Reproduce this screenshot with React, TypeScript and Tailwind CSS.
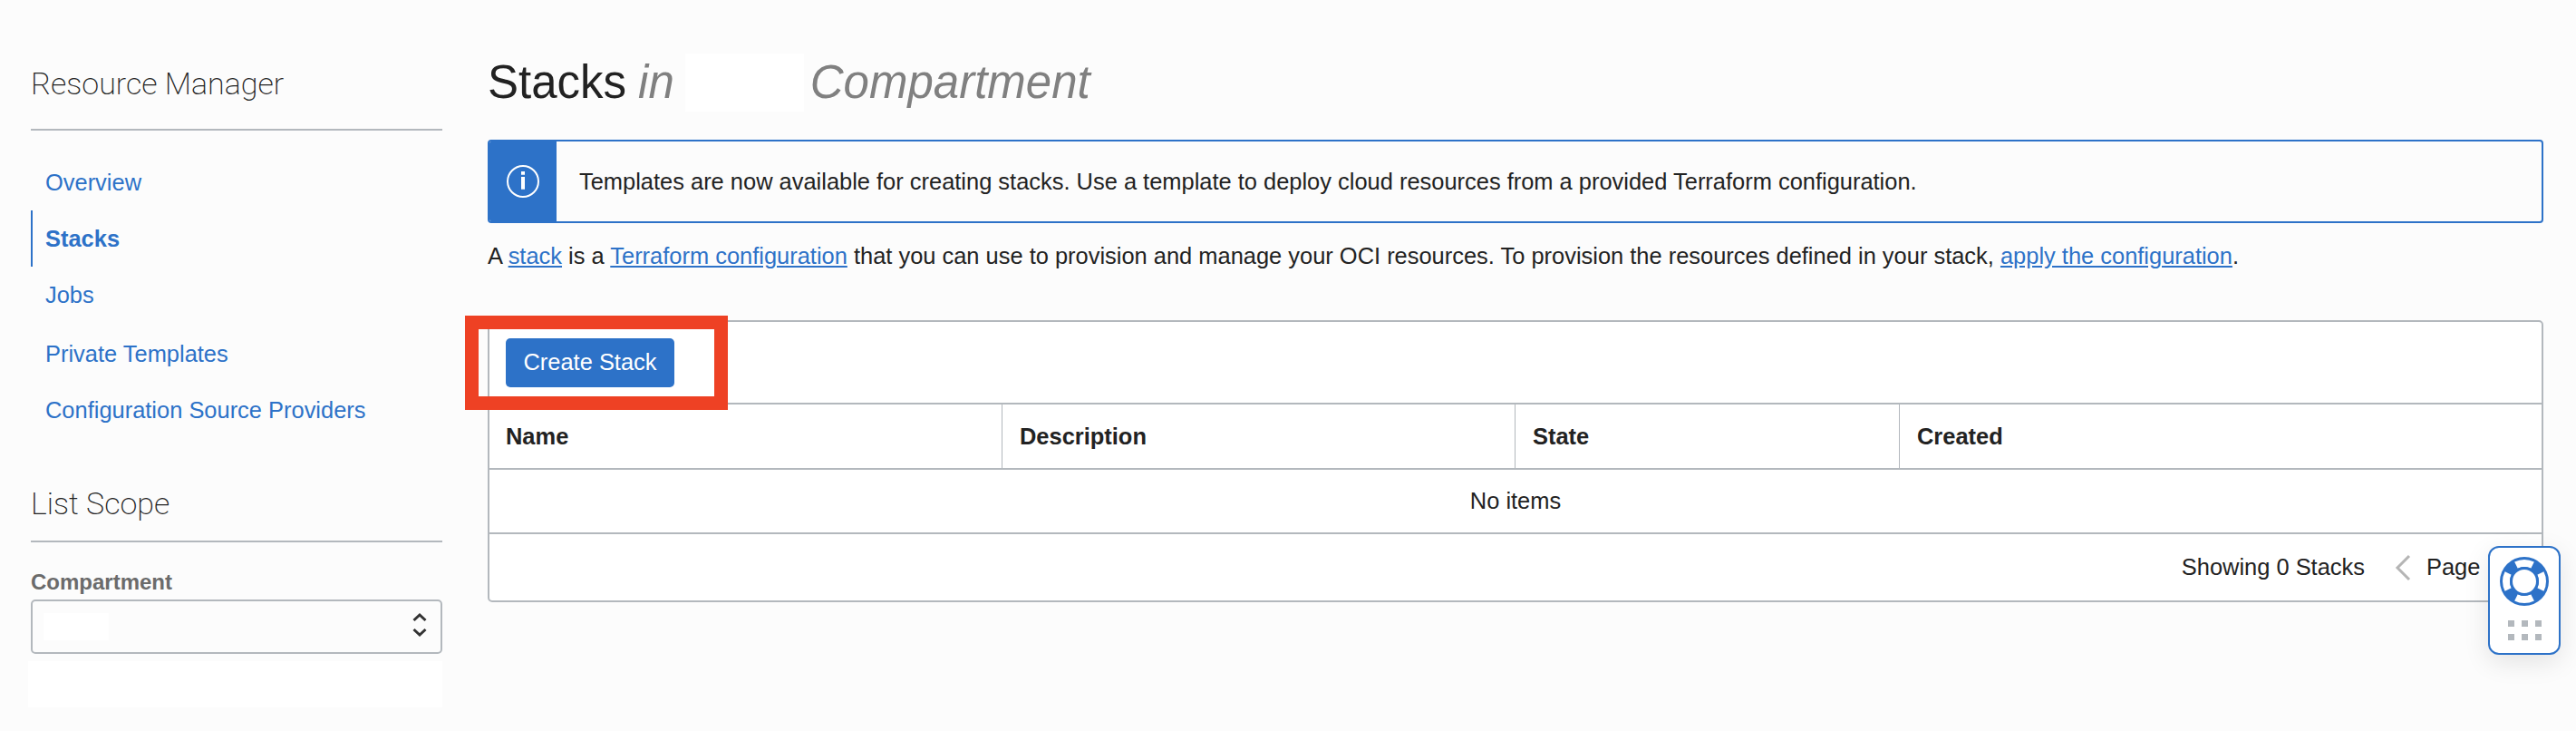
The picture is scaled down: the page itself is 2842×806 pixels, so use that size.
import React from 'react'

const navItems = ['Overview', 'Stacks', 'Jobs', 'Private Templates', 'Configuration Source Providers']
const columns = ['Name', 'Description', 'State', 'Created']

function LifeBuoy() {
  return (
    <svg width="56" height="56" viewBox="0 0 56 56" fill="none">
      <circle cx="28" cy="28" r="27" fill="#2d72c8" />
      {/* white arcs top, right, bottom, left; the blue left between them makes the diagonal bands */}
      <circle cx="28" cy="28" r="20" stroke="#fff" strokeWidth="8" pathLength="360" strokeDasharray="54 36" strokeDashoffset="27" />
      <circle cx="28" cy="28" r="14.5" fill="#fff" stroke="#2d72c8" strokeWidth="3" />
    </svg>
  )
}

export default function App() {
  return (
    <div className="relative h-[806px] w-[2842px] overflow-hidden bg-[#fcfcfc] font-['Liberation_Sans',sans-serif] text-[25.45px] text-[#222222]">
      <div className="flex">
        {/* Sidebar */}
        <aside className="ml-[34px] w-[454px] pt-[66px]">
          <h2 className="h-[52px] font-['Roboto',sans-serif] text-[34px] leading-[52px] font-extralight text-[#222222]">Resource Manager</h2>
          <div className="mt-[24px] h-[2px] bg-[#b3b8bd]" />
          <nav className="mt-[26px] flex flex-col">
            {navItems.map((item) => {
              const active = item === 'Stacks'
              return (
                <a
                  key={item}
                  className={`flex h-[62px] items-center border-l-2 pl-[14px] text-[#2d72c8] ${
                    active ? 'border-[#2d72c8] font-bold' : 'border-transparent'
                  } ${item === 'Private Templates' ? 'mt-[3px]' : ''}`}
                >
                  {item}
                </a>
              )
            })}
          </nav>
          <h2 className="mt-[46px] h-[52px] font-['Roboto',sans-serif] text-[34px] leading-[52px] font-extralight text-[#222222]">List Scope</h2>
          <div className="mt-[15px] h-[2px] bg-[#b3b8bd]" />
          <div className="mt-[28px] text-[24px] leading-[32px] font-bold text-[#6b6b6b]">Compartment</div>
          <div className="mt-[3px] flex h-[60px] items-center justify-between rounded-[5px] border-2 border-[#b3b8bd] pr-[14px] pl-[12px]">
            <div className="h-[30px] w-[72px] bg-white" />
            <svg width="18" height="32" viewBox="0 0 18 32" fill="none" stroke="#333" strokeWidth="3">
              <path d="M2.5 9L9 3l6.5 6M2.5 19L9 25l6.5-6" />
            </svg>
          </div>
          <div className="mt-[8px] -ml-[3px] h-[51px] w-[457px] bg-white" />
        </aside>

        {/* Main */}
        <main className="ml-[50px] w-[2268px] pt-[59px]">
          <h1 className="flex h-[64px] items-center pb-[2px] text-[51px] leading-none text-[#222222]">
            Stacks
            <i className="ml-[13px] text-[#808080]">in</i>
            <span className="ml-[12px] h-[64px] w-[131px] self-start bg-white" />
            <i className="ml-[7px] text-[#808080]">Compartment</i>
          </h1>

          <div className="mt-[31px] flex h-[92px] overflow-hidden rounded-[4px] border-2 border-[#2d72c8]">
            <div className="flex w-[74px] items-center justify-center bg-[#2d72c8]">
              <svg width="38" height="38" viewBox="0 0 38 38" fill="none" stroke="#fff" strokeWidth="2">
                <circle cx="19" cy="19" r="17" />
                <path d="M19 14v13.7M19 8v3.7" strokeWidth="4" />
              </svg>
            </div>
            <div className="flex items-center pl-[25px]">
              Templates are now available for creating stacks. Use a template to deploy cloud resources from a provided Terraform configuration.
            </div>
          </div>

          <p className="mt-[20px] h-[32px] leading-[32px]">
            A <a className="text-[#2d72c8] underline">stack</a> is a{' '}
            <a className="text-[#2d72c8] underline">Terraform configuration</a> that you can use to provision and manage your OCI resources. To provision the resources defined in your stack,{' '}
            <a className="text-[#2d72c8] underline">apply the configuration</a>.
          </p>

          <div className="mt-[55px] rounded-[5px] border-2 border-[#b3b8bd] bg-white">
            <div className="flex h-[91px] items-center border-b-2 border-[#b3b8bd] pl-[18px]">
              <button className="flex h-[54px] w-[186px] items-center justify-center rounded-[5px] bg-[#2d72c8] text-white">
                Create Stack
              </button>
            </div>
            <div className="grid h-[72px] grid-cols-[566px_566px_424px_1fr] border-b-2 border-[#b3b8bd] font-bold">
              {columns.map((col, i) => (
                <div key={col} className={`flex items-center ${i === 0 ? 'pl-[18px]' : 'pl-[19px]'} ${i < 3 ? 'border-r border-[#b3b8bd]' : ''}`}>
                  {col}
                </div>
              ))}
            </div>
            <div className="flex h-[71px] items-center justify-center border-b-2 border-[#b3b8bd]">No items</div>
            <div className="flex h-[73px] items-center justify-end pr-[127px]">
              <span>Showing 0 Stacks</span>
              <svg className="ml-[33px]" width="18" height="30" viewBox="0 0 18 30" fill="none" stroke="#b5b5b5" strokeWidth="3">
                <path d="M16 2L3 15l13 13" />
              </svg>
              <span className="ml-[17px] w-[0px]">Page</span>
            </div>
          </div>
        </main>
      </div>

      {/* Red annotation drawn over the screenshot */}
      <div className="absolute top-[348px] left-[513px] h-[104px] w-[290px] border-[15px] border-[#ee4124]" />

      {/* Floating help widget */}
      <div className="absolute top-[602px] left-[2745px] flex h-[120px] w-[80px] flex-col items-center rounded-[12px] border-2 border-[#2d72c8] bg-white pt-[9px] shadow-[0_8px_28px_rgba(0,0,0,0.1)]">
        <LifeBuoy />
        <div className="mt-[15px] grid grid-cols-3 gap-x-[8px] gap-y-[8px]">
          {[0, 1, 2, 3, 4, 5].map((n) => (
            <div key={n} className="h-[7px] w-[7px] bg-[#b3b8bd]" />
          ))}
        </div>
      </div>
    </div>
  )
}
